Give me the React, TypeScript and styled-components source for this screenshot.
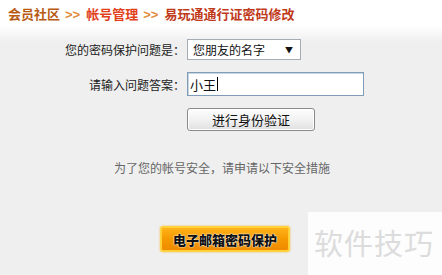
import React from "react";
import styled, { createGlobalStyle } from "styled-components";

const Global = createGlobalStyle`
  html, body { margin: 0; padding: 0; }
  body {
    background: #efefef;
    font-family: "Noto Sans CJK SC", "Noto Sans", sans-serif;
    font-size: 12px;
    color: #222;
    width: 442px;
    height: 275px;
    overflow: hidden;
  }
`;

const Page = styled.div`
  position: relative;
  width: 442px;
  height: 275px;
`;

const Header = styled.div`
  height: 42px;
  background: linear-gradient(to bottom, #ffffff 0px, #ffffff 26px, #efefef 42px);
  padding: 4px 0 0 8px;
  box-sizing: border-box;
`;

const Crumb = styled.span<{ $c: string }>`
  font-size: 13px;
  font-weight: bold;
  color: ${(p) => p.$c};
  line-height: 20px;
`;

const Sep = styled.span`
  font-size: 13px;
  font-weight: bold;
  color: #e08a3a;
  margin: 0 6px 0 5px;
  font-family: "Liberation Sans", sans-serif;
`;

const Form = styled.div`
  display: grid;
  grid-template-columns: 185px 1fr;
  column-gap: 2px;
  row-gap: 12px;
  margin-top: -3px;
`;

const Label = styled.div`
  text-align: right;
  font-size: 12px;
  color: #222;
  display: flex;
  align-items: center;
  justify-content: flex-end;
`;

const Select = styled.div`
  width: 114px;
  height: 21px;
  box-sizing: border-box;
  border: 1px solid #a5acb5;
  background: #fff;
  display: flex;
  align-items: center;
  justify-content: space-between;
  padding: 0 7px 0 5px;
  font-size: 12px;
  color: #111;
`;

const Arrow = styled.span`
  font-size: 8px;
  color: #111;
`;

const Input = styled.div`
  width: 177px;
  height: 24px;
  box-sizing: border-box;
  border: 1px solid #7f9db9;
  box-shadow: inset 1px 1px 0 #c8d4e0;
  background: #fff;
  display: flex;
  align-items: center;
  padding-left: 2px;
  font-size: 13px;
  color: #111;
`;

const Caret = styled.span`
  display: inline-block;
  width: 1px;
  height: 14px;
  background: #000;
  margin-left: 1px;
`;

const GreyButton = styled.button`
  width: 128px;
  height: 23px;
  border: 1px solid #8a8a8a;
  border-radius: 3px;
  background: linear-gradient(to bottom, #fdfdfd 0%, #f2f2f2 50%, #e0e0e0 100%);
  font-family: inherit;
  font-size: 13px;
  color: #111;
  padding: 0;
  box-shadow: inset 0 0 0 1px #fff;
`;

const Note = styled.div`
  text-align: center;
  color: #666;
  font-size: 12px;
  margin-top: 28px;
  padding-left: 2px;
`;

const OrangeRow = styled.div`
  padding-left: 160px;
  margin-top: 50px;
`;

const OrangeButton = styled.button`
  width: 130px;
  height: 26px;
  border: 2px solid #ffd23c;
  border-radius: 3px;
  background: linear-gradient(to bottom, #ffb21a 0%, #f59a00 50%, #ef8a00 100%);
  font-family: inherit;
  font-size: 13px;
  font-weight: 900;
  color: #111;
  padding: 0;
  text-shadow: 0 0 2px #fff, 0 0 1px #fff;
  box-shadow: 0 0 2px #f3b640;
`;

const Watermark = styled.div`
  position: absolute;
  left: 308px;
  top: 212px;
  right: 0;
  bottom: 0;
  background: #fdfdfd;
  color: #dcdcdc;
  font-size: 29px;
  padding: 9px 0 0 6px;
  letter-spacing: 1px;
`;

export default function App() {
  return (
    <Page>
      <Global />
      <Header>
        <Crumb $c="#b85a12">会员社区</Crumb>
        <Sep>&gt;&gt;</Sep>
        <Crumb $c="#e2401a">帐号管理</Crumb>
        <Sep>&gt;&gt;</Sep>
        <Crumb $c="#c03a1a">易玩通通行证密码修改</Crumb>
      </Header>
      <Form>
        <Label>您的密码保护问题是：</Label>
        <div>
          <Select>
            <span>您朋友的名字</span>
            <Arrow>▼</Arrow>
          </Select>
        </div>
        <Label>请输入问题答案：</Label>
        <div>
          <Input>
            小王<Caret />
          </Input>
        </div>
        <div />
        <div>
          <GreyButton>进行身份验证</GreyButton>
        </div>
      </Form>
      <Note>为了您的帐号安全，请申请以下安全措施</Note>
      <OrangeRow>
        <OrangeButton>电子邮箱密码保护</OrangeButton>
      </OrangeRow>
      <Watermark>软件技巧</Watermark>
    </Page>
  );
}
